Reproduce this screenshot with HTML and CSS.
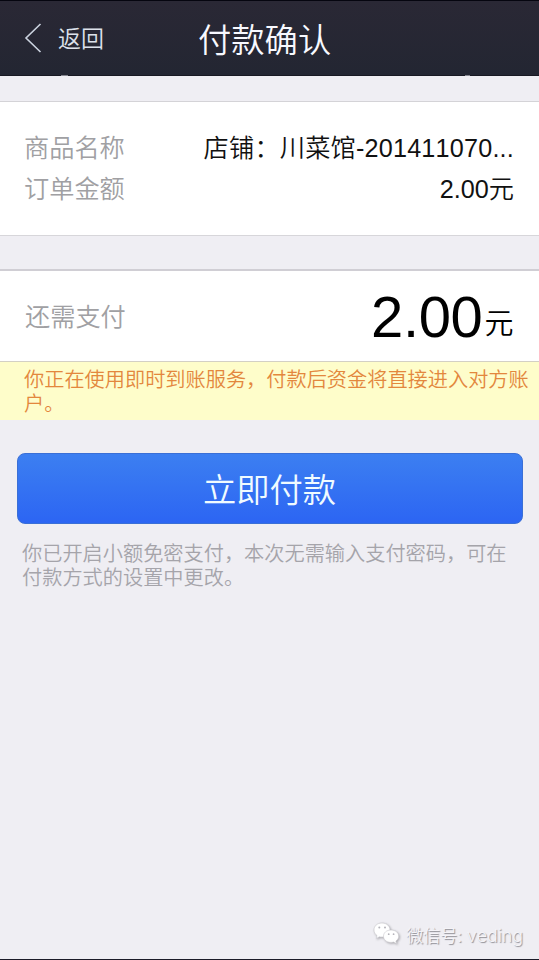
FILE: index.html
```
<!DOCTYPE html>
<html lang="zh-CN">
<head>
    <meta charset="utf-8">
    <meta name="viewport" content="width=device-width, initial-scale=1">
    <title>付款确认</title>
    <link rel="stylesheet" href="styles.css">
</head>
<body>
    <div class="page">
        <header class="header">
            <a class="back" href="#">
                <svg width="18" height="30" viewBox="0 0 18 30"><path d="M16.500 1 2 15l14.500 14" fill="none" stroke="#cbd3df" stroke-width="1.600"/></svg>
                <span>返回</span>
            </a>
            <h1>付款确认</h1>
            <i class="speck speck-left"></i>
            <i class="speck speck-right"></i>
        </header>

        <main>
            <div class="order">
                <div class="row">
                    <span class="label">商品名称</span>
                    <span class="value name">店铺：川菜馆-201411070...</span>
                </div>
                <div class="row">
                    <span class="label">订单金额</span>
                    <span class="value">2.00元</span>
                </div>
            </div>

            <div class="total">
                <span class="label">还需支付</span>
                <span class="amount">2.00<small>元</small></span>
            </div>
            <p class="notice">你正在使用即时到账服务，付款后资金将直接进入对方账户。</p>

            <button class="pay">立即付款</button>
            <p class="hint">你已开启小额免密支付，本次无需输入支付密码，可在付款方式的设置中更改。</p>
        </main>

        <footer class="footer">
            <svg class="wechat" width="28" height="24" viewBox="0 0 28 24">
                <path class="bubble" d="M9 1C4 1 1 4.200 1 8c0 2.400 1.200 4.200 3 5.500L3.200 16.500l3.200-1.700c3.800 1 10.600-.8 10.600-6.800C17 4 13.500 1 9 1z"/>
                <path class="bubble" d="M18 8c-4.500 0-7.500 2.800-7.500 6.200s3 6.200 7.500 6.200c1 0 1.800-.1 2.600-.4l3 1.700-.7-2.700c1.700-1.200 2.800-2.800 2.800-4.800C25.700 10.800 22.500 8 18 8z"/>
                <g class="eyes"><circle cx="6.300" cy="5.600" r="1"/><circle cx="12" cy="5.600" r="1"/><circle cx="15.700" cy="12.200" r=".9"/><circle cx="20.600" cy="12.200" r=".9"/></g>
            </svg>
            <span>微信号: <span class="account">veding</span></span>
        </footer>
    </div>
</body>
</html>
```
FILE: styles.css
```
* { box-sizing: border-box; }
body {
    margin: 0;
    font-family: "Liberation Sans", "Noto Sans CJK SC", sans-serif;
    font-weight: 350;
    font-kerning: none;
    background: #efeef3;
}
.page {
    display: flex;
    flex-direction: column;
    height: 960px;
    border-bottom: 1px solid #1b1b28;
}
.header {
    position: relative;
    display: grid;
    grid-template-columns: 174px auto 1fr;
    align-items: center;
    height: 76px;
    padding: 0 24px;
    border-top: 1px solid #05050f;
    border-bottom: 1px solid #181923;
    background: linear-gradient(#2a2835, #232632);
}
.back {
    display: flex;
    align-items: center;
    gap: 16px;
    color: #dde2eb;
    font-size: 23px;
    text-decoration: none;
}
.back span { padding-bottom: 3px; }
.header h1 {
    margin: 0;
    padding-top: 5px;
    color: #f8f9ff;
    font-size: 33.300px;
    font-weight: 350;
    line-height: 48px;
}
.speck {
    position: absolute;
    bottom: -1px;
    width: 7px;
    height: 1px;
    background: #85868f;
}
.speck-left { left: 61px; }
.speck-right { left: 465px; width: 5px; }
main { flex: 1; }
.order {
    height: 135px;
    margin-top: 25px;
    padding: 26px 25px 0 24px;
    border-top: 1px solid #d4d3d7;
    border-bottom: 1px solid #d7d6da;
    background: #fff;
}
.row {
    display: flex;
    justify-content: space-between;
    height: 41px;
    line-height: 41px;
    font-size: 25.200px;
}
.label { color: #a0a0a3; font-size: 25.200px; }
.value { color: #111; }
.name { letter-spacing: .2px; }
.total {
    display: flex;
    align-items: center;
    justify-content: space-between;
    height: 93px;
    margin-top: 33px;
    padding: 0 26px 0 25px;
    border-top: 2px solid #d0ced4;
    border-bottom: 1px solid #d3d0c4;
    background: #fff;
}
.total .label { padding-bottom: 2px; }
.amount {
    padding-top: 1px;
    color: #000;
    font-size: 58px;
    line-height: 80px;
    letter-spacing: -.4px;
}
.amount small {
    margin-left: 2px;
    font-size: 29px;
    line-height: 1;
    vertical-align: 3px;
}
.notice {
    height: 58px;
    margin: 0;
    padding: 6px 0 0 24px;
    color: #e3873d;
    background: #fefdca;
    font-size: 20.200px;
    line-height: 24px;
}
.pay {
    display: block;
    width: 506px;
    height: 71px;
    margin: 33px auto 0;
    padding: 0 0 3px;
    border: 1px solid #3a6fd6;
    border-radius: 8px;
    background: linear-gradient(#3c7ff1, #2c65f3);
    color: #f0fbff;
    font: inherit;
    font-size: 33.300px;
}
.hint {
    margin: 18px 22px 0;
    color: #a5a4aa;
    font-size: 20.200px;
    line-height: 24px;
}
.footer {
    display: flex;
    align-items: center;
    justify-content: flex-end;
    gap: 5px;
    height: 50px;
    padding-right: 16px;
    color: #f5f4f8;
    font-size: 17px;
    text-shadow: 1px 1px 1px #8f8e94;
}
.wechat { filter: drop-shadow(1px 1px 1px #aaa9ae); }
.bubble { fill: #fff; stroke: #c9c8cd; stroke-width: .6; }
.eyes { fill: #b5b4ba; }
.account {
    font-family: Inter, sans-serif;
    font-size: 17.800px;
    font-weight: 300;
}
```
